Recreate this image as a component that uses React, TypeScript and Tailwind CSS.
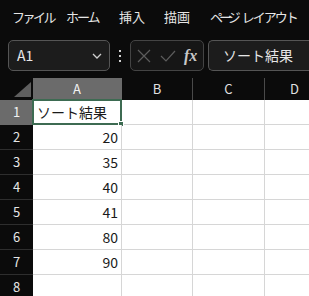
import React from 'react';

const jp = { fontFamily: '"Noto Sans CJK JP", "Noto Sans", sans-serif' };

const menus = [
  { label: 'ファイル', w: 'w-[54px]', track: 'tracking-[-2.5px]' },
  { label: 'ホーム', w: 'w-[53px]', track: 'tracking-[-2px]' },
  { label: '挿入', w: 'w-[45px]', track: 'tracking-[0px]' },
  { label: '描画', w: 'w-[46px]', track: 'tracking-[0px]' },
];

const cols = ['A', 'B', 'C', 'D'];
const values = ['ソート結果', '20', '35', '40', '41', '80', '90', ''];

export default function App() {
  return (
    <div className="w-[309px] h-[296px] overflow-hidden bg-[#0b0b0b] text-[#e6e6e6]" style={jp}>
      {/* menu bar */}
      <div className="flex h-[36px] items-center pl-[12px] pb-[2px] text-[13px]">
        {menus.map((m) => (
          <span key={m.label} className={`${m.w} ${m.track} shrink-0 whitespace-nowrap`}>
            {m.label}
          </span>
        ))}
        <span className="shrink-0 whitespace-nowrap">
          <span className="tracking-[-4px]">ページ</span>
          <span className="ml-[5px] tracking-[-2px]">レイアウト</span>
        </span>
      </div>

      {/* name box + formula bar */}
      <div className="flex h-[31px] items-stretch mt-[4px] pl-[8px]">
        <div className="flex w-[102px] items-center justify-between rounded-[5px] border border-[#555] bg-[#1c1c1c] pl-[8px] pr-[7px]">
          <span className="text-[14px] text-[#e8e8e8]">A1</span>
          <svg width="10" height="6" viewBox="0 0 10 6" fill="none" stroke="#cfcfcf" strokeWidth="1.3">
            <path d="M1 1l4 4 4-4" />
          </svg>
        </div>
        <div className="flex w-[20px] flex-col items-center justify-center gap-[3px]">
          <span className="h-[2px] w-[2px] bg-[#d0d0d0]" />
          <span className="h-[2px] w-[2px] bg-[#d0d0d0]" />
          <span className="h-[2px] w-[2px] bg-[#d0d0d0]" />
        </div>
        <div className="flex w-[74px] items-center rounded-[5px] border border-[#444] bg-[#161616] pl-[6px]">
          <svg width="14" height="14" viewBox="0 0 14 14" stroke="#5c5c5c" strokeWidth="1.2">
            <path d="M1 1l12 12M13 1L1 13" />
          </svg>
          <svg className="ml-[9px]" width="16" height="12" viewBox="0 0 16 12" fill="none" stroke="#5c5c5c" strokeWidth="1.2">
            <path d="M1 6l5 5L15 1" />
          </svg>
          <span className="ml-[8px] text-[16px] font-bold italic text-[#c8c8c8]" style={{ fontFamily: '"Liberation Serif", serif' }}>
            fx
          </span>
        </div>
        <div className="ml-[4px] flex flex-1 items-center rounded-l-[5px] border border-r-0 border-[#555] bg-[#1c1c1c] pl-[14px] text-[14px] whitespace-nowrap">
          ソート結果
        </div>
      </div>

      {/* grid */}
      <div className="mt-[7px] grid grid-cols-[33px_89px_71px_72px_60px] grid-rows-[22px_repeat(8,25px)]">
        <div className="relative bg-[#0b0b0b]">
          <svg className="absolute left-[14px] top-[4px]" width="17" height="15" viewBox="0 0 17 15">
            <path d="M17 0V15H0Z" fill="#5f5f5f" />
          </svg>
        </div>
        {cols.map((c, i) => (
          <div
            key={c}
            className={`flex items-center justify-center border-r text-[13px] ${
              i === 0 ? 'bg-[#6b6b6b] border-[#6b6b6b] text-[#f2f2f2]' : 'bg-[#0b0b0b] border-[#4a4a4a] text-[#e0e0e0]'
            }`}
          >
            {c}
          </div>
        ))}
        {values.map((v, r) => (
          <React.Fragment key={r}>
            <div
              className={`flex items-center justify-center border-b text-[13px] ${
                r === 0 ? 'bg-[#6b6b6b] border-[#6b6b6b] text-[#f2f2f2]' : 'bg-[#0b0b0b] border-[#2e2e2e] text-[#e6e6e6]'
              }`}
            >
              {r + 1}
            </div>
            <div
              className={`relative flex items-center border-b border-r border-[#d6d6d6] bg-white text-[14px] text-[#1a1a1a] ${
                r === 0 ? 'justify-start pl-[4px]' : 'justify-end pr-[3px]'
              }`}
            >
              {v}
              {r === 0 && (
                <>
                  <div className="absolute -left-[1px] -top-[1px] -right-[1px] -bottom-[1px] border-2 border-[#3d6b52]" />
                  <div className="absolute -right-[3px] -bottom-[3px] h-[6px] w-[6px] border border-white bg-[#3d6b52]" />
                </>
              )}
            </div>
            <div className="border-b border-r border-[#d6d6d6] bg-white" />
            <div className="border-b border-r border-[#d6d6d6] bg-white" />
            <div className="border-b border-r border-[#d6d6d6] bg-white" />
          </React.Fragment>
        ))}
      </div>
    </div>
  );
}
